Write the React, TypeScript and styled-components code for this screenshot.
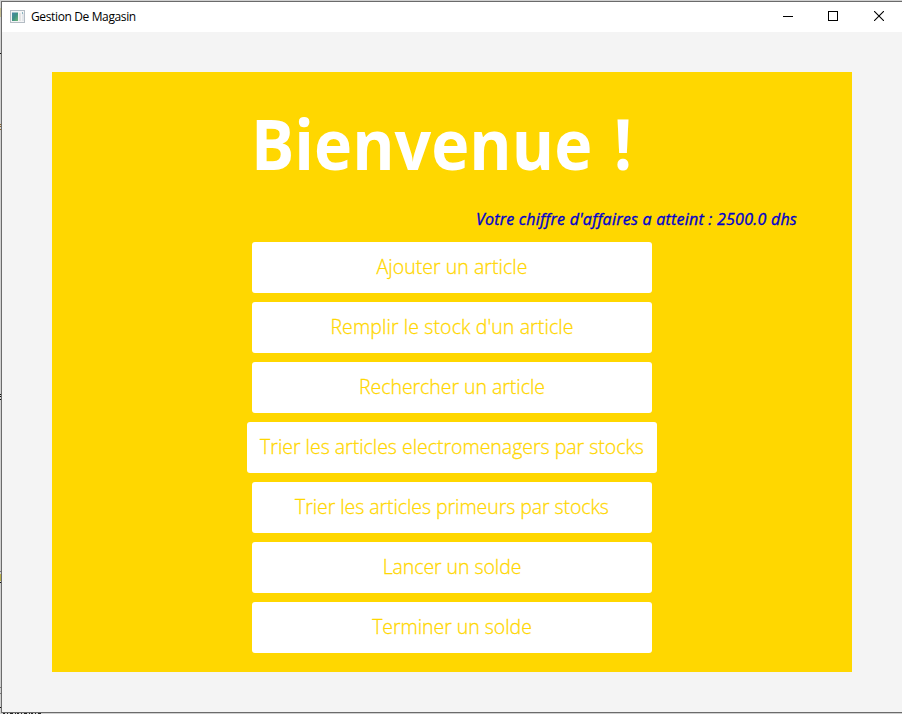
import React from "react";
import styled, { createGlobalStyle } from "styled-components";

const GlobalStyle = createGlobalStyle`
  *, *::before, *::after { box-sizing: border-box; }
  html, body { margin: 0; padding: 0; overflow: hidden; }
`;

const Desktop = styled.div`
  display: grid;
  grid-template-columns: 1px 901px;
  grid-template-rows: 712px 1px;
  width: 902px;
  height: 714px;
  padding-top: 1px;
  overflow: hidden;
  background: #d0d0d0;
  font-family: "Open Sans", "Noto Sans", sans-serif;
`;

/* Slivers of the window behind, visible along the desktop edge. */
const LeftSliver = styled.svg`
  display: block;
  grid-row: 1 / 3;
  width: 1px;
  height: 713px;
`;

const BottomSliver = styled.svg`
  display: block;
  width: 42px;
  height: 1px;
`;

const Window = styled.main`
  display: flex;
  flex-direction: column;
  border: solid #6b6b6b;
  border-width: 1px 0 1px 1px;
  background: #f4f4f4;
`;

const TitleBar = styled.header`
  display: flex;
  align-items: center;
  flex: 0 0 30px;
  padding-left: 8px;
  background: #fff;
`;

const AppIcon = styled.svg`
  width: 15px;
  height: 14px;
  margin: -1px 6px 0 0;
`;

const WindowTitle = styled.span`
  flex: 1;
  font: 400 12px/16px "Open Sans", "Noto Sans", sans-serif;
  letter-spacing: -0.37px;
  color: #000;
`;

const Controls = styled.div`
  display: flex;
  align-self: stretch;
`;

const Control = styled.button`
  display: flex;
  align-items: center;
  justify-content: center;
  width: 46px;
  padding: 0 0 2px;
  border: 0;
  background: none;
`;

const Content = styled.section`
  display: flex;
  flex: 1;
  padding: 40px 50px;
`;

const Panel = styled.div`
  display: flex;
  flex-direction: column;
  width: 800px;
  height: 600px;
  padding-top: 23px;
  background: #ffd700;
`;

const Heading = styled.h1`
  margin: 0;
  padding-left: 199px;
  width: max-content;
  font-size: 69px;
  line-height: 96px;
  font-weight: 700;
  word-spacing: 5px;
  white-space: nowrap;
  color: #fff;

  span {
    display: inline-block;
    transform: scaleX(0.935);
    transform-origin: left;
  }
`;

const Turnover = styled.p`
  align-self: flex-end;
  margin: 0;
  padding: 16px 55px 11px 0;
  font-size: 16px;
  line-height: 24px;
  font-style: italic;
  font-weight: 500;
  letter-spacing: 0.24px;
  -webkit-text-stroke: 0.35px #0000cd;
  white-space: nowrap;
  color: #0000cd;
`;

const Menu = styled.nav`
  display: flex;
  flex-direction: column;
  align-items: center;
  gap: 9px;
`;

const MenuButton = styled.button<{ $spacing: number }>`
  min-width: 400px;
  height: 51px;
  padding: 0 13px 1px;
  border: 0;
  border-radius: 3px;
  background: #fff;
  color: #ffd700;
  font: 300 19.5px/28px "Open Sans", "Noto Sans", sans-serif;
  letter-spacing: ${({ $spacing }) => $spacing}px;
  -webkit-text-stroke: 0.3px #ffd700;
  white-space: nowrap;
`;

const actions = [
  { label: "Ajouter un article", spacing: 0.04 },
  { label: "Remplir le stock d'un article", spacing: 0.1 },
  { label: "Rechercher un article", spacing: -0.04 },
  { label: "Trier les articles electromenagers par stocks", spacing: -0.02 },
  { label: "Trier les articles primeurs par stocks", spacing: -0.07 },
  { label: "Lancer un solde", spacing: -0.08 },
  { label: "Terminer un solde", spacing: -0.04 },
];

export default function App() {
  return (
    <>
      <GlobalStyle />
      <Desktop>
        <LeftSliver aria-hidden="true" shapeRendering="crispEdges">
          <path d="M0 7h1v9h-1z" fill="#c4bd92" />
          <path d="M0 123h1v1h-1zM0 125h1v1h-1zM0 128h1v1h-1z" fill="#8a6530" />
          <path d="M0 52h1v1h-1zM0 393h1v1h-1zM0 395h1v1h-1zM0 398h1v1h-1zM0 581h1v1h-1zM0 706h1v1h-1z" fill="#111" />
          <path d="M0 573h1v7h-1z" fill="#b9ae4a" />
          <path d="M0 570h1v1h-1zM0 686h1v1h-1zM0 692h1v1h-1z" fill="#777" />
        </LeftSliver>
        <Window>
          <TitleBar>
            <AppIcon viewBox="0 0 15 14" aria-hidden="true">
              <defs>
                <linearGradient id="screen" x1="0" y1="0" x2="1" y2="1">
                  <stop offset="0" stopColor="#4a87a9" />
                  <stop offset="0.5" stopColor="#3f9185" />
                  <stop offset="1" stopColor="#72b878" />
                </linearGradient>
              </defs>
              <rect x="0.5" y="0.5" width="14" height="12" fill="#f4f5f6" stroke="#b4bcc4" />
              <rect x="2" y="2.5" width="6" height="8.5" fill="url(#screen)" />
              <rect x="9" y="3" width="2" height="8" fill="#e3e3e3" />
              <rect x="12" y="3" width="2" height="8" fill="#e3e6ea" />
              <rect x="12" y="2" width="1" height="2" fill="#8ab4c0" />
            </AppIcon>
            <WindowTitle>Gestion De Magasin</WindowTitle>
            <Controls>
              <Control aria-label="Réduire">
                <svg width="12" height="10" shapeRendering="crispEdges"><rect x="2" y="5" width="10" height="1" /></svg>
              </Control>
              <Control aria-label="Agrandir">
                <svg width="10" height="10" shapeRendering="crispEdges"><rect x=".5" y=".5" width="9" height="9" fill="none" stroke="#000" /></svg>
              </Control>
              <Control aria-label="Fermer">
                <svg width="10" height="10"><path d="M0 0L10 10M10 0L0 10" stroke="#000" strokeWidth="1.1" /></svg>
              </Control>
            </Controls>
          </TitleBar>
          <Content>
            <Panel>
              <Heading><span>Bienvenue !</span></Heading>
              <Turnover>Votre chiffre d'affaires a atteint : 2500.0 dhs</Turnover>
              <Menu>
                {actions.map(({ label, spacing }) => (
                  <MenuButton key={label} $spacing={spacing}>{label}</MenuButton>
                ))}
              </Menu>
            </Panel>
          </Content>
        </Window>
        <BottomSliver aria-hidden="true">
          <path d="M2 .5H42" stroke="#222" strokeDasharray="2 2 1 2 3 2 1 1" />
        </BottomSliver>
      </Desktop>
    </>
  );
}
